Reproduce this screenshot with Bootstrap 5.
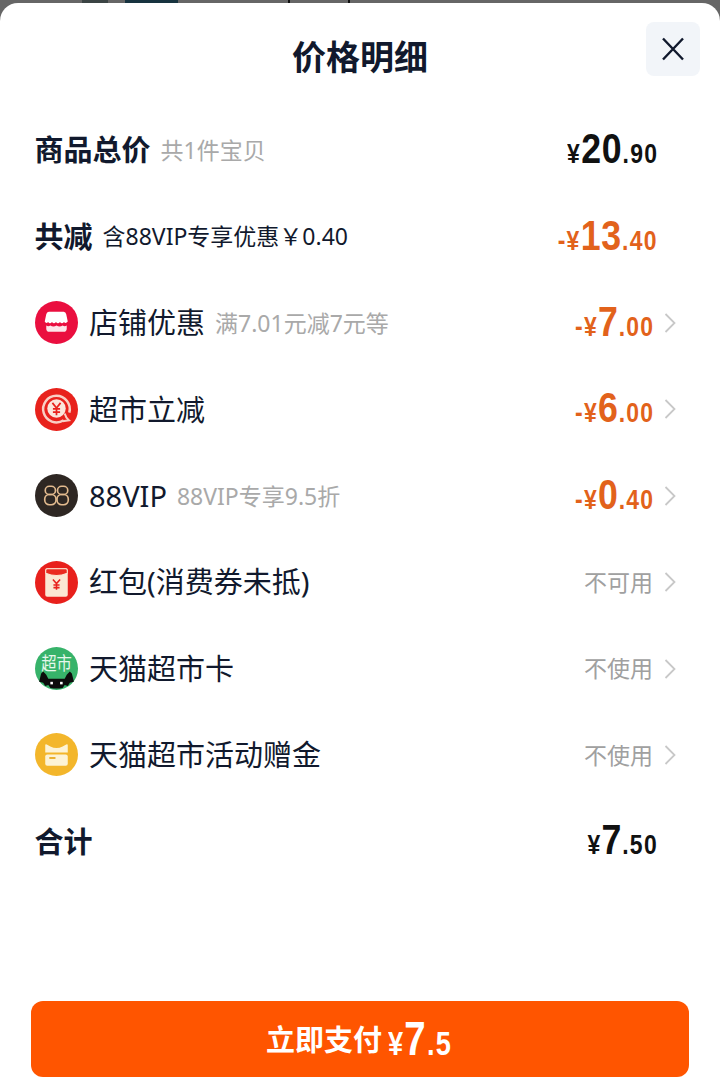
<!DOCTYPE html>
<html lang="zh-CN">
<head>
    <meta charset="UTF-8">
    <meta name="viewport" content="width=device-width, initial-scale=1.0">
    <title>价格明细</title>
    <link href="https://cdn.jsdelivr.net/npm/bootstrap@5.3.0/dist/css/bootstrap.min.css" rel="stylesheet">
    <style>
        html, body {
            height: 1080px;
            overflow: hidden;
        }

        body {
            /* page behind the sheet, only its last pixels still show */
            background: linear-gradient(90deg, #666 82px, #3b4444 82px, #3b4444 108px, #666 108px, #666 125px, #17333f 125px, #17333f 178px, #666 178px, #666 288px, #111 288px, #111 290px, #666 290px, #666 348px, #111 348px, #111 350px, #666 350px);
            font-family: "Noto Sans", "Noto Sans CJK SC", sans-serif;
            color: #11192d;
        }

        .sheet {
            height: 1077px;
            margin-top: 3px;
            background-color: #fff;
            border-radius: 18px 18px 0 0;
        }

        .sheet-head {
            height: 104px;
            padding-top: 4px;
        }

        .sheet-title {
            font-size: 34px;
            font-weight: 700;
            margin: 0;
            line-height: 1;
        }

        .close-btn {
            position: absolute;
            top: 19px;
            right: 20px;
            width: 54px;
            height: 54px;
            background-color: #f2f5f9;
            border: 0;
            border-radius: 8px;
        }

        .price-list {
            padding: 0 35px 0 34.500px;
        }

        .price-row {
            height: 86.4px;
        }

        .row-strong {
            font-size: 29px;
            font-weight: 700;
        }

        .row-name {
            font-size: 29px;
            margin-left: 11.500px;
            white-space: nowrap;
        }

        .row-hint {
            font-size: 23px;
            color: #a9a9a9;
            margin-left: 10px;
            white-space: nowrap;
        }

        .row-note {
            font-size: 23px;
            color: #11192d;
            margin-left: 10px;
            white-space: nowrap;
        }

        .round-icon {
            width: 43px;
            height: 43px;
            flex: none;
        }

        .amount {
            font-family: "Liberation Sans", sans-serif;
            font-weight: 700;
            font-size: 27px;
            line-height: 1;
            white-space: nowrap;
            letter-spacing: 1.500px;
            margin-right: 27px;
            margin-top: -2px;
            color: #111;
            transform: scaleX(.85);
            transform-origin: right center;
        }

        .amount b {
            font-size: 42px;
            letter-spacing: 1px;
        }

        .amount-off {
            color: #e2621b;
        }

        .amount-link {
            margin-right: 1px;
        }

        .row-state {
            font-size: 23px;
            color: #a0a0a0;
            padding-right: 2px;
        }

        .chevron {
            width: 12px;
            height: 20px;
            margin-left: 9px;
            margin-right: 9px;
            flex: none;
        }

        .pay-btn {
            position: fixed;
            left: 31px;
            right: 31px;
            bottom: 3px;
            height: 76px;
            background-color: #ff5500;
            color: #fff;
            border: 0;
            border-radius: 12px;
            font-size: 29px;
            font-weight: 700;
            line-height: 1;
        }

        .pay-num {
            font-family: "Liberation Sans", sans-serif;
            font-size: 34px;
            letter-spacing: 1.500px;
            margin-left: 6px;
            transform: scaleX(.8);
            transform-origin: left center;
            width: 66px;
            white-space: nowrap;
        }

        .pay-big {
            font-size: 48px;
        }
    </style>
</head>

<body>
    <div class="sheet position-relative">
        <div class="sheet-head d-flex align-items-center justify-content-center">
            <h1 class="sheet-title">价格明细</h1>
        </div>
        <button class="close-btn d-flex align-items-center justify-content-center" type="button" aria-label="关闭">
            <svg width="24" height="24" viewBox="0 0 24 24"><path d="M2 1.500L22 22.500M22 1.500L2 22.500" stroke="#11192d" stroke-width="2.400" fill="none"/></svg>
        </button>

        <div class="price-list">
            <!-- 总价 -->
            <div class="price-row d-flex align-items-center">
                <span class="row-strong">商品总价</span>
                <span class="row-hint">共1件宝贝</span>
                <span class="amount ms-auto">¥<b>20</b>.90</span>
            </div>
            <div class="price-row d-flex align-items-center">
                <span class="row-strong">共减</span>
                <span class="row-note">含88VIP专享优惠￥0.40</span>
                <span class="amount amount-off ms-auto">-¥<b>13</b>.40</span>
            </div>

            <!-- 优惠明细 -->
            <div class="price-row d-flex align-items-center">
                <svg class="round-icon" viewBox="0 0 42 42">
                    <circle cx="21" cy="21" r="21" fill="#ea0f3f"/>
                    <path d="M14 10.500h14q2 0 2.500 2.500l1.500 7q-2 2.500-3.700 .5q-2 2.500-3.900 0q-2 2.500-3.900 0q-2 2.500-3.900 0q-2 2.500-3.800 0q-2 2-3.300-.5l1.500-7q.5-2.500 2.500-2.500z" fill="#fff"/>
                    <path d="M11 24q2 1.500 4 0 3 2 6 0 3 2 6 0 2 1.500 4 0v3q0 3-3 3h-14q-3 0-3-3z" fill="#fde6ea"/>
                </svg>
                <span class="row-name">店铺优惠</span>
                <span class="row-hint">满7.01元减7元等</span>
                <span class="amount amount-off amount-link ms-auto">-¥<b>7</b>.00</span>
                <svg class="chevron" viewBox="0 0 12 20"><path d="M1.500 1L10.500 10L1.500 19" stroke="#c8c8c8" stroke-width="1.800" fill="none"/></svg>
            </div>
            <div class="price-row d-flex align-items-center">
                <svg class="round-icon" viewBox="0 0 42 42">
                    <circle cx="21" cy="21" r="21" fill="#e8221c"/>
                    <path d="M28 31.500A13 13 0 1 1 33.500 24" stroke="#f9cfc4" stroke-width="2.400" fill="none"/>
                    <path d="M29 25q1 4 4 6.500l-6 1" stroke="#f9cfc4" stroke-width="2" fill="none"/>
                    <circle cx="21" cy="20" r="9" fill="#fbe6dc"/>
                    <path d="M17 14.500l4 5 4-5M21 19.500v7M17.500 20.500h7M17.500 23.500h7" stroke="#e8221c" stroke-width="1.700" fill="none"/>
                </svg>
                <span class="row-name">超市立减</span>
                <span class="amount amount-off amount-link ms-auto">-¥<b>6</b>.00</span>
                <svg class="chevron" viewBox="0 0 12 20"><path d="M1.500 1L10.500 10L1.500 19" stroke="#c8c8c8" stroke-width="1.800" fill="none"/></svg>
            </div>
            <div class="price-row d-flex align-items-center">
                <svg class="round-icon" viewBox="0 0 42 42">
                    <circle cx="21" cy="21" r="21" fill="#2e2723"/>
                    <g stroke="#e3bb8f" stroke-width="1.600" fill="none">
                        <rect x="10" y="12" width="10" height="8" rx="4"/>
                        <rect x="9.500" y="20" width="11" height="10" rx="4.500"/>
                        <rect x="22" y="12" width="10" height="8" rx="4"/>
                        <rect x="21.500" y="20" width="11" height="10" rx="4.500"/>
                    </g>
                </svg>
                <span class="row-name">88VIP</span>
                <span class="row-hint">88VIP专享9.5折</span>
                <span class="amount amount-off amount-link ms-auto">-¥<b>0</b>.40</span>
                <svg class="chevron" viewBox="0 0 12 20"><path d="M1.500 1L10.500 10L1.500 19" stroke="#c8c8c8" stroke-width="1.800" fill="none"/></svg>
            </div>
            <div class="price-row d-flex align-items-center">
                <svg class="round-icon" viewBox="0 0 42 42">
                    <circle cx="21" cy="21" r="21" fill="#e8201c"/>
                    <rect x="10" y="7" width="22" height="28" rx="2" fill="#fbe7d3"/>
                    <path d="M10.500 9q0-1.500 1.500-1.500h18q1.500 0 1.500 1.500v3q-10.500 4.500-21 0z" fill="#ea2a20" stroke="#fbe7d3" stroke-width="1"/>
                    <path d="M17.500 18l3.500 4 3.500-4M21 22v6M18 23.500h6M18 26h6" stroke="#e8201c" stroke-width="1.500" fill="none"/>
                </svg>
                <span class="row-name">红包(消费券未抵)</span>
                <span class="row-state ms-auto">不可用</span>
                <svg class="chevron" viewBox="0 0 12 20"><path d="M1.500 1L10.500 10L1.500 19" stroke="#c8c8c8" stroke-width="1.800" fill="none"/></svg>
            </div>
            <div class="price-row d-flex align-items-center">
                <svg class="round-icon" viewBox="0 0 42 42">
                    <circle cx="21" cy="21" r="21" fill="#37b36a"/>
                    <text transform="translate(21 22) scale(1 1.200)" text-anchor="middle" font-size="15" fill="#e6f7ec" font-family="Noto Sans CJK SC">超市</text>
                    <path d="M4 34l2-8 2-2 3 3 2 4h16l2-4 3-3 2 2 2 8-4 1-2 3-3-1-2 3q-6 1-12 0l-2-3-3 1-2-3z" fill="#0c0c0c"/>
                    <rect x="15" y="34" width="2.500" height="2.500" fill="#fff"/>
                    <rect x="24.500" y="34" width="2.500" height="2.500" fill="#fff"/>
                </svg>
                <span class="row-name">天猫超市卡</span>
                <span class="row-state ms-auto">不使用</span>
                <svg class="chevron" viewBox="0 0 12 20"><path d="M1.500 1L10.500 10L1.500 19" stroke="#c8c8c8" stroke-width="1.800" fill="none"/></svg>
            </div>
            <div class="price-row d-flex align-items-center">
                <svg class="round-icon" viewBox="0 0 42 42">
                    <circle cx="21" cy="21" r="21" fill="#f3b62b"/>
                    <path d="M10 12q0-1.500 1.500-.8l3.500 2q6 3 12 0l3.500-2q1.500-.7 1.500.8v7h-22z" fill="#fdf3d5"/>
                    <rect x="10" y="21" width="22" height="11" rx="2" fill="#fdf3d5"/>
                    <rect x="14" y="23.500" width="6" height="1.800" fill="#e8ac25"/>
                </svg>
                <span class="row-name">天猫超市活动赠金</span>
                <span class="row-state ms-auto">不使用</span>
                <svg class="chevron" viewBox="0 0 12 20"><path d="M1.500 1L10.500 10L1.500 19" stroke="#c8c8c8" stroke-width="1.800" fill="none"/></svg>
            </div>

            <div class="price-row d-flex align-items-center">
                <span class="row-strong">合计</span>
                <span class="amount ms-auto">¥<b>7</b>.50</span>
            </div>
        </div>

        <button class="pay-btn d-flex align-items-center justify-content-center" type="button">
            <span>立即支付</span><span class="pay-num">¥<span class="pay-big">7</span>.5</span>
        </button>
    </div>

    <script src="https://cdn.jsdelivr.net/npm/bootstrap@5.3.0/dist/js/bootstrap.bundle.min.js"></script>
</body>

</html>
